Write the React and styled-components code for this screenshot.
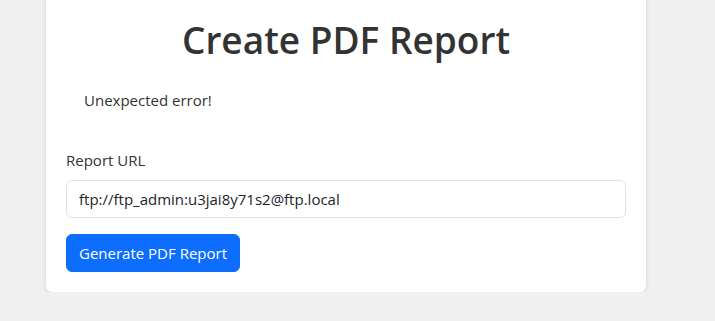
import React from "react";
import styled, { createGlobalStyle } from "styled-components";

const Global = createGlobalStyle`
  html, body { margin: 0; padding: 0; }
  body {
    background: #f0f0f0;
    font-family: "Open Sans", "Noto Sans", sans-serif;
    color: #333;
    overflow: hidden;
  }
  * { box-sizing: border-box; }
`;

const Card = styled.div`
  width: 600px;
  margin: -4px 0 0 46px;
  background: #fff;
  border-radius: 0 0 6px 6px;
  box-shadow: 0 1px 4px rgba(0, 0, 0, 0.12);
  padding: 20px;
  display: flex;
  flex-direction: column;
`;

const Title = styled.h1`
  margin: 0 0 7px;
  text-align: center;
  font-size: 37px;
  font-weight: 600;
  line-height: 48px;
  color: #333;
`;

const Alert = styled.div`
  padding: 17px 18px;
  margin-bottom: 19px;
  font-size: 15px;
  line-height: 24px;
  color: #333;
`;

const Label = styled.label`
  display: block;
  font-size: 15px;
  line-height: 24px;
  margin-bottom: 8px;
  color: #333;
`;

const Input = styled.input`
  width: 100%;
  height: 38px;
  padding: 6px 12px;
  font-family: inherit;
  font-size: 15px;
  color: #212529;
  border: 1px solid #dee2e6;
  border-radius: 6px;
  outline: none;
  margin-bottom: 16px;
`;

const Button = styled.button`
  align-self: flex-start;
  height: 38px;
  padding: 6px 12px;
  font-family: inherit;
  font-size: 15px;
  color: #fff;
  background: #0d6efd;
  border: 1px solid #0d6efd;
  border-radius: 6px;
  cursor: pointer;
`;

export default function App() {
  return (
    <>
      <Global />
      <Card>
        <Title>Create PDF Report</Title>
        <Alert>Unexpected error!</Alert>
        <Label htmlFor="url">Report URL</Label>
        <Input id="url" defaultValue="ftp://ftp_admin:u3jai8y71s2@ftp.local" />
        <Button>Generate PDF Report</Button>
      </Card>
    </>
  );
}
